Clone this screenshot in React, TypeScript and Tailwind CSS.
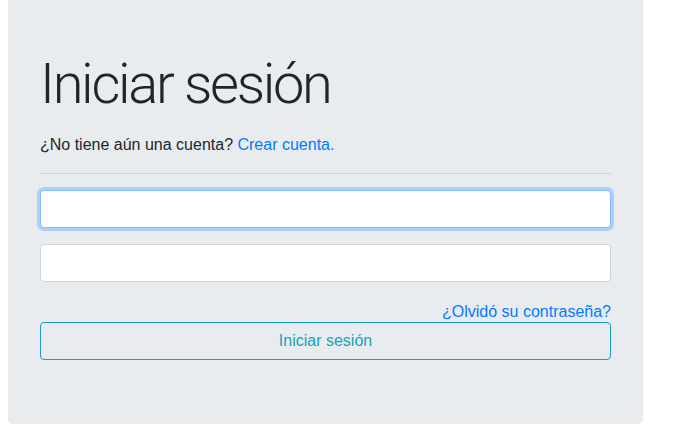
export default function App() {
  return (
    <div className="min-h-screen bg-white font-['Liberation_Sans',Arial,sans-serif] text-[#212529]">
      <div className="ml-2 w-[635px] rounded-b-[5px] bg-[#e9ecef] px-8 pb-16 pt-[51px]">
        <h1 className="mb-[15px] font-['Roboto',sans-serif] text-[56px] font-light leading-[1.2] tracking-[-2.3px]">
          Iniciar sesión
        </h1>
        <p className="text-base leading-6">
          ¿No tiene aún una cuenta?{" "}
          <a href="#" className="text-[#007bff]">
            Crear cuenta.
          </a>
        </p>
        <hr className="my-4 border-t border-[rgba(0,0,0,0.1)]" />
        <form onSubmit={(e) => e.preventDefault()}>
          <input
            type="text"
            className="block h-[38px] w-full rounded-[4px] border border-[#80bdff] bg-white px-3 shadow-[0_0_0_3px_rgba(0,123,255,0.25)] outline-none"
          />
          <input
            type="password"
            className="mt-4 block h-[38px] w-full rounded-[4px] border border-[#ced4da] bg-white px-3 outline-none"
          />
          <div className="mt-4 pt-1 text-right text-[16px] leading-[20px]">
            <a href="#" className="text-[#007bff]">
              ¿Olvidó su contraseña?
            </a>
          </div>
          <button
            type="submit"
            className="block h-[38px] w-full rounded-[4px] border border-[#17a2b8] text-base text-[#17a2b8]"
          >
            Iniciar sesión
          </button>
        </form>
      </div>
    </div>
  );
}
